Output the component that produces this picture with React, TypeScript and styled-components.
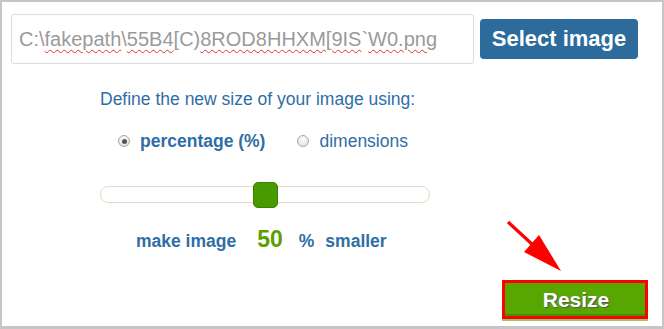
import React from "react";
import styled, { createGlobalStyle } from "styled-components";

const Global = createGlobalStyle`
  html, body { margin: 0; padding: 0; background: #fff; }
  body { font-family: "Liberation Sans", Arial, sans-serif; }
  * { box-sizing: border-box; }
`;

const Frame = styled.div`
  position: relative;
  width: 664px;
  height: 329px;
  border: 2px solid #c6c6c6;
  border-bottom-width: 3px;
  padding: 12px 0 0 9px;
  display: flex;
  flex-direction: column;
  background: #fff;
`;

const TopRow = styled.div`
  display: flex;
  align-items: center;
  gap: 6px;
  height: 50px;
`;

const FileField = styled.div`
  width: 463px;
  height: 50px;
  border: 1px solid #dcdcdc;
  border-radius: 3px;
  padding-left: 7px;
  display: flex;
  align-items: center;
  font-size: 20px;
  color: #9a9a9a;
  white-space: nowrap;
  overflow: hidden;
`;

const Misspelled = styled.span`
  text-decoration: underline wavy #e03030;
  text-decoration-thickness: 1px;
  text-underline-offset: 3px;
`;

const SelectButton = styled.button`
  width: 158px;
  height: 40px;
  border: none;
  border-radius: 4px;
  background: #2c6b9b;
  color: #fff;
  font-family: "Liberation Sans", Arial, sans-serif;
  font-weight: bold;
  font-size: 22px;
  padding: 0;
  cursor: pointer;
`;

const Settings = styled.div`
  margin-left: 89px;
  width: 330px;
  display: flex;
  flex-direction: column;
  color: #2f6ea5;
  font-size: 17.5px;
  line-height: 20px;
`;

const Prompt = styled.div`
  margin-top: 25px;
  white-space: nowrap;
`;

const RadioRow = styled.div`
  margin-top: 22px;
  height: 20px;
  display: flex;
  align-items: center;
  padding-left: 18px;
`;

const RadioOption = styled.label<{ $bold?: boolean }>`
  display: flex;
  align-items: center;
  gap: 10px;
  font-weight: ${(p) => (p.$bold ? "bold" : "normal")};
  margin-right: 32px;
  white-space: nowrap;
`;

const RadioDot = styled.span<{ $checked?: boolean }>`
  width: 12px;
  height: 12px;
  border-radius: 50%;
  border: 1px solid #a8a8a8;
  background: radial-gradient(circle at 50% 35%, #fdfdfd, #dcdcdc);
  display: flex;
  align-items: center;
  justify-content: center;
  &::after {
    content: "";
    display: ${(p) => (p.$checked ? "block" : "none")};
    width: 5px;
    height: 5px;
    border-radius: 50%;
    background: #555;
  }
`;

const SliderWrap = styled.div`
  margin-top: 30px;
  height: 26px;
  display: flex;
  align-items: center;
`;

const Track = styled.div`
  position: relative;
  width: 330px;
  height: 17px;
  border: 1px solid #e2dbc3;
  border-radius: 8px;
  background: #fff;
`;

const Thumb = styled.div`
  position: absolute;
  top: -5px;
  width: 25px;
  height: 26px;
  border-radius: 5px;
  background: #479b00;
  border: 1px solid #3b8000;
`;

const ResultRow = styled.div`
  margin-top: 22px;
  padding-left: 36px;
  display: flex;
  align-items: baseline;
  font-weight: bold;
  white-space: nowrap;
`;

const Amount = styled.span`
  font-size: 23px;
  color: #5b9f00;
  margin: 0 16px 0 21px;
`;

const Unit = styled.span`
  margin-right: 11px;
`;

const Footer = styled.div`
  margin-top: 29px;
  display: flex;
  justify-content: flex-end;
  padding-right: 14px;
`;

const Highlight = styled.div`
  border: 3px solid #ff0000;
  width: 146px;
  height: 39px;
  box-shadow: 0 2px 0 #9cc46a;
`;

const ResizeButton = styled.button`
  width: 100%;
  height: 100%;
  border: none;
  background: #58a600;
  box-shadow: inset 0 -2px 0 #4a8f00;
  color: #fff;
  font-family: "Liberation Sans", Arial, sans-serif;
  font-weight: bold;
  font-size: 21px;
  text-shadow: 1px 1px 1px #555;
  padding: 0 0 0 2px;
  cursor: pointer;
`;

const Arrow = styled.svg`
  position: absolute;
  left: 501px;
  top: 214px;
  width: 64px;
  height: 64px;
  overflow: visible;
`;

export default function App() {
  const value = 50;
  const trackInner = 328 - 25;
  return (
    <>
      <Global />
      <Frame>
        <TopRow>
          <FileField>
            C:\<Misspelled>fakepath</Misspelled>\<Misspelled>55B4</Misspelled>[C)
            <Misspelled>8ROD8HHXM[9IS</Misspelled>`<Misspelled>W0.png</Misspelled>
          </FileField>
          <SelectButton>Select image</SelectButton>
        </TopRow>
        <Settings>
          <Prompt>Define the new size of your image using:</Prompt>
          <RadioRow>
            <RadioOption $bold>
              <RadioDot $checked />
              percentage (%)
            </RadioOption>
            <RadioOption>
              <RadioDot />
              dimensions
            </RadioOption>
          </RadioRow>
          <SliderWrap>
            <Track>
              <Thumb style={{ left: (trackInner * value) / 100 }} />
            </Track>
          </SliderWrap>
          <ResultRow>
            make image<Amount>{value}</Amount>
            <Unit>%</Unit>smaller
          </ResultRow>
        </Settings>
        <Footer>
          <Highlight>
            <ResizeButton>Resize</ResizeButton>
          </Highlight>
        </Footer>
        <Arrow viewBox="505 218 64 64">
          <line x1="510" y1="224" x2="536" y2="248" stroke="#ff0000" strokeWidth="3.2" />
          <polygon points="563,273 526,254 541,237" fill="#ff0000" />
        </Arrow>
      </Frame>
    </>
  );
}
